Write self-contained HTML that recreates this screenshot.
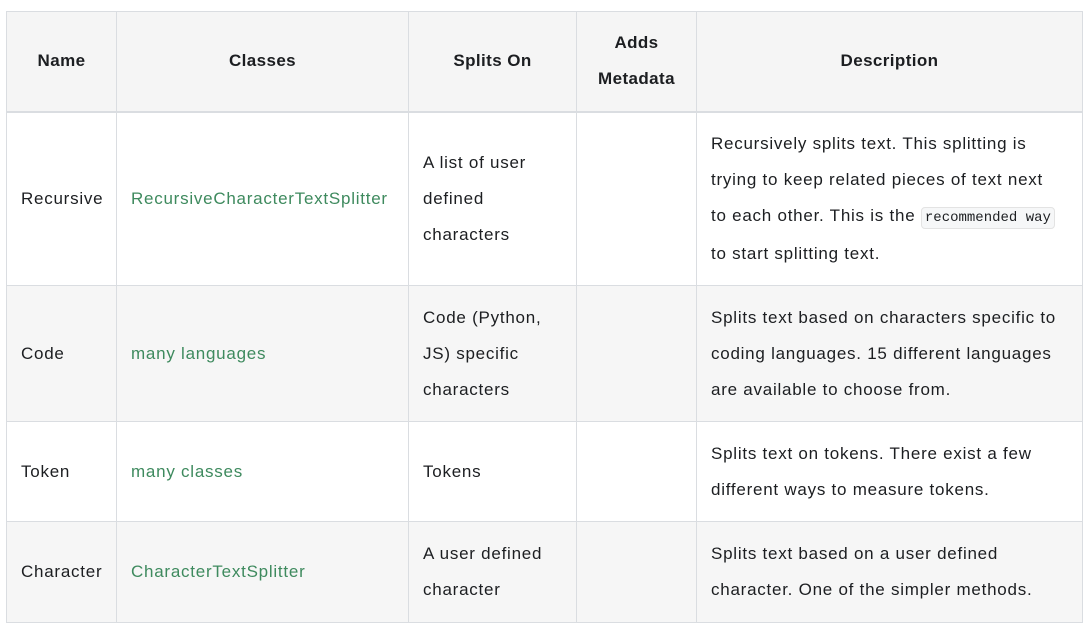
<!DOCTYPE html>
<html><head><style>
body{margin:0;background:#fff;font-family:"Liberation Sans",sans-serif;color:#1c1e21;}
table{position:absolute;left:6px;top:11px;width:1076px;border-collapse:collapse;table-layout:fixed;font-size:17px;letter-spacing:0.75px;line-height:36px;}
td,th{border:1px solid #dadde1;padding:0 14px;vertical-align:middle;text-align:left;white-space:nowrap;overflow:hidden;}
th{font-weight:bold;text-align:center;background:#f5f5f5;border-bottom:2px solid #dadde1;letter-spacing:0.4px;}
tr.g td{background:#f6f6f6;}
a{color:#3e8a5e;text-decoration:none;}
code{font-family:"Liberation Mono",monospace;font-size:14px;letter-spacing:0;background:#f6f7f8;border:1px solid #e3e3e3;border-radius:4px;padding:2px 3px;}
</style></head><body>
<table>
<colgroup><col style="width:110px"><col style="width:292px"><col style="width:168px"><col style="width:120px"><col style="width:386px"></colgroup>
<tr style="height:100px"><th>Name</th><th>Classes</th><th>Splits On</th><th>Adds<br>Metadata</th><th>Description</th></tr>
<tr style="height:174px"><td>Recursive</td><td><a>RecursiveCharacterTextSplitter</a></td><td>A list of user<br>defined<br>characters</td><td></td><td>Recursively splits text. This splitting is<br>trying to keep related pieces of text next<br>to each other. This is the <code>recommended way</code><br>to start splitting text.</td></tr>
<tr class="g" style="height:136px"><td>Code</td><td><a>many languages</a></td><td>Code (Python,<br>JS) specific<br>characters</td><td></td><td>Splits text based on characters specific to<br>coding languages. 15 different languages<br>are available to choose from.</td></tr>
<tr style="height:100px"><td>Token</td><td><a>many classes</a></td><td>Tokens</td><td></td><td>Splits text on tokens. There exist a few<br>different ways to measure tokens.</td></tr>
<tr class="g" style="height:101px"><td>Character</td><td><a>CharacterTextSplitter</a></td><td>A user defined<br>character</td><td></td><td>Splits text based on a user defined<br>character. One of the simpler methods.</td></tr>
</table>
</body></html>
